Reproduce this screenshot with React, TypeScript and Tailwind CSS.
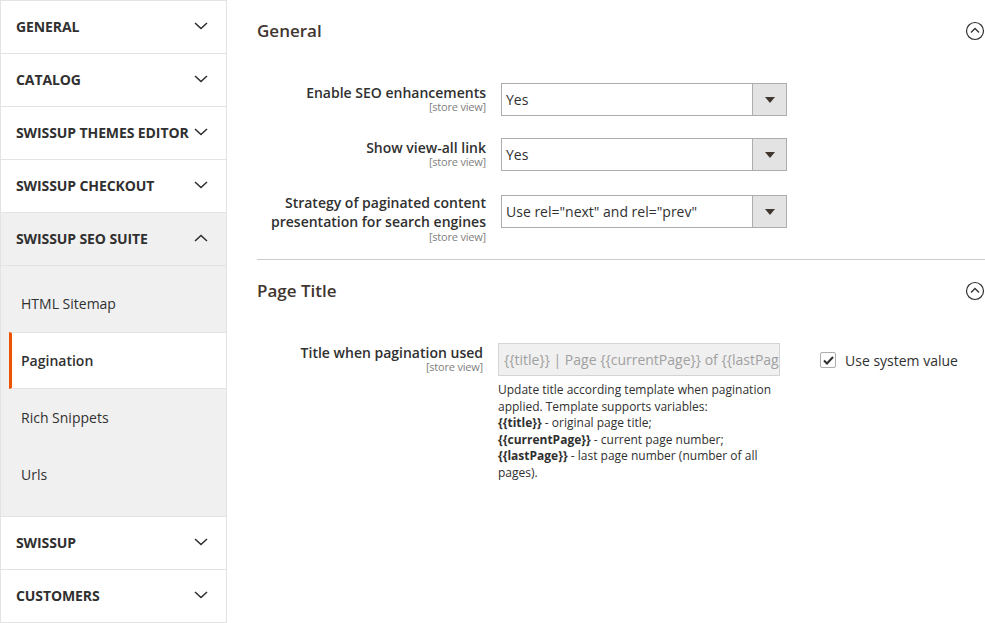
import React from 'react';

const Chevron = ({ up = false }: { up?: boolean }) => (
  <svg width="14" height="8" viewBox="0 0 14 8" className="shrink-0">
    <polyline
      points={up ? '1,7 7,1.5 13,7' : '1,1 7,6.5 13,1'}
      fill="none"
      stroke="#303030"
      strokeWidth="1.6"
    />
  </svg>
);

const CircleToggle = () => (
  <svg width="20" height="20" viewBox="0 0 20 20">
    <circle cx="10" cy="10" r="8.5" fill="none" stroke="#303030" strokeWidth="1.2" />
    <polyline points="6,11.5 10,7.5 14,11.5" fill="none" stroke="#303030" strokeWidth="1.3" />
  </svg>
);

const topItems = ['GENERAL', 'CATALOG', 'SWISSUP THEMES EDITOR', 'SWISSUP CHECKOUT'];
const subItems = ['HTML Sitemap', 'Pagination', 'Rich Snippets', 'Urls'];

const TopItem = ({ label, open = false }: { label: string; open?: boolean }) => (
  <div
    className={`h-[53px] flex items-center justify-between pl-[15px] pr-[18px] pb-[2px] border-b border-[#e3e3e3] ${
      open ? 'bg-[#f0f0f0]' : 'bg-white'
    }`}
  >
    <span className="text-[14px] font-bold text-[#303030] tracking-[-0.1px] whitespace-nowrap">{label}</span>
    <Chevron up={open} />
  </div>
);

const Select = ({ value }: { value: string }) => (
  <div className="w-[286px] h-[33px] flex border border-[#adadad] bg-white">
    <div className="flex-1 flex items-center pl-[4px] text-[14px] text-[#303030]">{value}</div>
    <div className="w-[34px] bg-[#e3e3e3] border-l border-[#adadad] flex items-center justify-center">
      <svg width="10" height="6" viewBox="0 0 10 6">
        <polygon points="0,0 10,0 5,6" fill="#41362f" />
      </svg>
    </div>
  </div>
);

const StoreView = () => (
  <div className="text-[11px] text-[#808080] leading-[12px] tracking-[-0.2px]">[store view]</div>
);

const Label = ({ lines }: { lines: string[] }) => {
  const multi = lines.length > 1;
  return (
    <div className={`w-[229px] text-right ${multi ? '-mt-[2px]' : 'pt-[1px]'}`}>
      {lines.map((l) => (
        <div
          key={l}
          className={`text-[14px] font-semibold text-[#303030] ${multi ? 'leading-[19px]' : 'leading-[17px]'}`}
        >
          {l}
        </div>
      ))}
      <StoreView />
    </div>
  );
};

export default function App() {
  return (
    <div
      className="w-[985px] h-[623px] flex bg-white overflow-hidden"
      style={{ fontFamily: '"Open Sans", "Noto Sans", sans-serif' }}
    >
      {/* sidebar */}
      <div className="w-[227px] shrink-0 border-t border-l border-r border-[#e3e3e3] self-start">
        {topItems.map((t) => (
          <TopItem key={t} label={t} />
        ))}
        <TopItem label="SWISSUP SEO SUITE" open />
        <div className="bg-[#f0f0f0] pt-[9px] pb-[13px] border-b border-[#e3e3e3]">
          {subItems.map((s) => {
            const active = s === 'Pagination';
            return (
              <div
                key={s}
                className={`ml-2 h-[57px] flex items-center pl-[9px] border-l-[3px] ${
                  active
                    ? 'bg-white border-l-[#eb5202] border-y border-y-[#e3e3e3] font-semibold'
                    : 'border-l-transparent'
                } text-[14px] text-[#303030]`}
              >
                {s}
              </div>
            );
          })}
        </div>
        <TopItem label="SWISSUP" />
        <TopItem label="CUSTOMERS" />
      </div>

      {/* main */}
      <div className="flex-1 pl-[30px]">
        <div className="flex items-center justify-between pt-[19px] pb-[40px]">
          <h2 className="text-[17px] font-semibold text-[#41362f] leading-[24px]">General</h2>
          <CircleToggle />
        </div>

        <div className="flex flex-col">
          <div className="flex gap-[15px]">
            <Label lines={['Enable SEO enhancements']} />
            <Select value="Yes" />
          </div>
          <div className="flex gap-[15px] mt-[22px]">
            <Label lines={['Show view-all link']} />
            <Select value="Yes" />
          </div>
          <div className="flex gap-[15px] mt-[24px]">
            <Label lines={['Strategy of paginated content', 'presentation for search engines']} />
            <Select value={'Use rel="next" and rel="prev"'} />
          </div>
        </div>

        <div className="border-t border-[#cccccc] mt-[16px]" />

        <div className="flex items-center justify-between pt-[19px] pb-[40px]">
          <h2 className="text-[17px] font-semibold text-[#41362f] leading-[24px]">Page Title</h2>
          <CircleToggle />
        </div>

        <div className="flex">
          <div className="w-[226px] text-right pt-[1px]">
            <div className="text-[14px] font-semibold text-[#303030] leading-[17px]">
              Title when pagination used
            </div>
            <StoreView />
          </div>
          <div className="ml-[15px] w-[282px]">
            <div className="h-[33px] border border-[#d4d4d4] bg-[#f0f0f0] flex items-center pl-[5px] overflow-hidden whitespace-nowrap text-[14px] text-[#a0a0a0]">
              {'{{title}} | Page {{currentPage}} of {{lastPage}}'}
            </div>
            <div className="mt-[6px] text-[12px] leading-[16.6px] text-[#303030]">
              Update title according template when pagination applied. Template supports variables:
              <br />
              <b className="font-bold">{'{{title}}'}</b> - original page title;
              <br />
              <b className="font-bold">{'{{currentPage}}'}</b> - current page number;
              <br />
              <b className="font-bold">{'{{lastPage}}'}</b> - last page number (number of all pages).
            </div>
          </div>
          <div className="ml-[40px] pt-[9px] flex items-start gap-[9px]">
            <div className="w-[16px] h-[16px] border border-[#adadad] rounded-[2px] bg-white flex items-center justify-center">
              <svg width="11" height="9" viewBox="0 0 11 9">
                <polyline points="1,4.5 4,7.5 10,1" fill="none" stroke="#303030" strokeWidth="2" />
              </svg>
            </div>
            <span className="text-[14px] text-[#303030] leading-[17px]">Use system value</span>
          </div>
        </div>
      </div>
    </div>
  );
}
